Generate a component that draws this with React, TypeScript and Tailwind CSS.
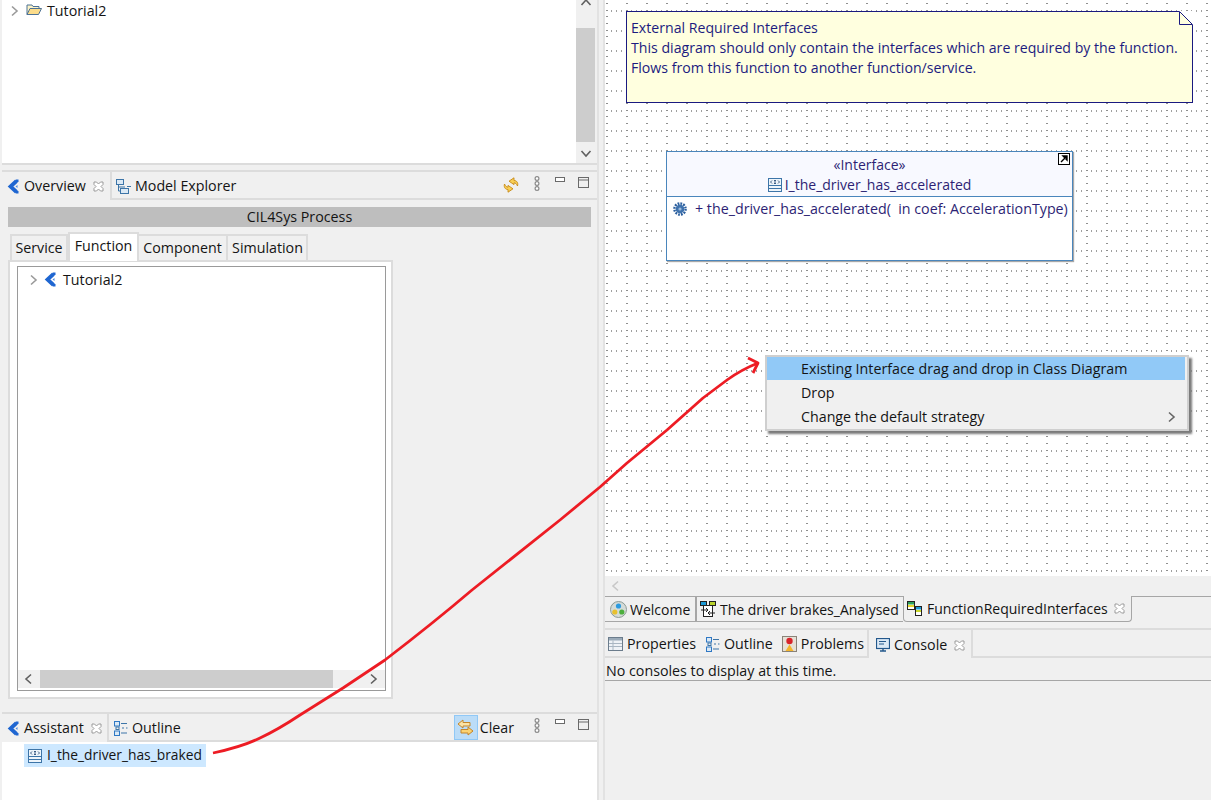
import React from 'react';

const Chev = ({ dir = 'right', cls = 'text-[#9a9a9a]' }: { dir?: 'right' | 'left' | 'up' | 'down'; cls?: string }) => {
  const d = {
    right: 'M4 1.5 L9 6 L4 10.5',
    left: 'M8 1.5 L3 6 L8 10.5',
    up: 'M1.5 8 L6 3 L10.5 8',
    down: 'M1.5 4 L6 9 L10.5 4',
  }[dir];
  return (
    <svg width="12" height="12" viewBox="0 0 12 12" className={`shrink-0 ${cls}`} fill="none" stroke="currentColor" strokeWidth="1.6">
      <path d={d} />
    </svg>
  );
};

const CloseX = () => (
  <svg width="11" height="11" viewBox="0 0 11 11" className="shrink-0">
    <path d="M1 1 H3.5 L5.5 3 L7.5 1 H10 V3.5 L8 5.5 L10 7.5 V10 H7.5 L5.5 8 L3.5 10 H1 V7.5 L3 5.5 L1 3.5 Z" fill="#fff" stroke="#9a9a9a" strokeWidth="1" />
  </svg>
);

const ProcessIcon = () => (
  <svg width="13" height="15" viewBox="0 0 13 15" className="shrink-0">
    <path d="M9.5 2 L3.5 7.5 L9.5 13" fill="none" stroke="#1f66d1" strokeWidth="3.8" />
    <rect x="9" y="0.5" width="2.5" height="2.5" fill="#1f66d1" />
    <rect x="9" y="12" width="2.5" height="2.5" fill="#1f66d1" />
    <path d="M10.5 6 L8.5 7.5 L10.5 9 Z" fill="#4f8ae0" />
  </svg>
);

const FolderIcon = () => (
  <svg width="16" height="13" viewBox="0 0 16 13" className="shrink-0">
    <path d="M1 11.5 V2 H6 L7 3.5 H13 V5.5" fill="#fdf3c6" stroke="#4d7296" />
    <path d="M1 11.5 L4 5.5 H15.5 L12.5 11.5 Z" fill="#fbdc8b" stroke="#4d7296" />
  </svg>
);

const InterfaceIcon = () => (
  <svg width="14" height="14" viewBox="0 0 14 14" className="shrink-0">
    <rect x="0.5" y="0.5" width="13" height="13" fill="#eef5fb" stroke="#3d75a8" />
    <path d="M0.5 7.5 H13.5 M0.5 10.5 H13.5" stroke="#3d75a8" />
    <path d="M4 2.5 L2.5 4 L4 5.5 M10 2.5 L11.5 4 L10 5.5 M6 2.5 H8 M7 2.5 V5.5 M6 5.5 H8" stroke="#2b4f78" fill="none" strokeWidth="0.9" />
  </svg>
);

const ExplorerIcon = () => (
  <svg width="15" height="15" viewBox="0 0 15 15" className="-ml-[1px] shrink-0">
    <rect x="0.5" y="0.5" width="7" height="5" fill="#dbe9f5" stroke="#3d75a8" />
    <rect x="4.5" y="9.5" width="8" height="5" fill="#dbe9f5" stroke="#3d75a8" />
    <path d="M2.5 5.5 V12 H4.5 M2.5 8 H9 M11 7.5 H15" stroke="#3d75a8" fill="none" />
  </svg>
);

const OutlineIcon = () => (
  <svg width="14" height="15" viewBox="0 0 14 15" className="shrink-0">
    <rect x="0.5" y="0.5" width="5" height="4.5" fill="#dbe9f5" stroke="#2f78c4" />
    <rect x="0.5" y="10" width="5" height="4.5" fill="#dbe9f5" stroke="#2f78c4" />
    <path d="M7 2.5 H13 M8 7 H10 M12 7 H13.5 M7 12 H13" stroke="#3d75a8" />
    <rect x="2" y="6" width="3" height="2.5" fill="none" stroke="#3d75a8" />
  </svg>
);

const SyncIcon = () => (
  <svg width="16" height="16" viewBox="0 0 16 16" className="shrink-0" fill="#f9cf55" stroke="#c78a16" strokeWidth="0.9">
    <path d="M14.5 9 C15.5 5.5 13.5 3.5 11 3.5 V0.8 L6 4.2 L11 7.6 V5.8 C12.5 5.8 13.5 7 14.5 9 Z" />
    <path d="M1.5 7 C0.5 10.5 2.5 12.5 5 12.5 V15.2 L10 11.8 L5 8.4 V10.2 C3.5 10.2 2.5 9 1.5 7 Z" />
  </svg>
);

const ViewMenu = () => (
  <svg width="6" height="15" viewBox="0 0 6 15" className="mt-[-4px] shrink-0" fill="#fff" stroke="#8a8a8a" strokeWidth="1.2">
    <circle cx="3" cy="2.5" r="1.9" />
    <circle cx="3" cy="7.5" r="1.9" />
    <circle cx="3" cy="12.5" r="1.9" />
  </svg>
);

const MinMax = () => (
  <div className="ml-[15px] mr-[8px] flex items-start gap-[13px]">
    <svg width="10" height="5" viewBox="0 0 10 5" className="mt-[-5px]">
      <rect x="0.5" y="0.5" width="9" height="4" fill="#fff" stroke="#6a6a6a" />
    </svg>
    <svg width="11" height="11" viewBox="0 0 11 11" className="mt-[-5px]">
      <rect x="0.5" y="0.5" width="10" height="10" fill="#f0f0f0" stroke="#6a6a6a" />
      <path d="M0.5 3 H10.5" stroke="#6a6a6a" />
    </svg>
  </div>
);

const ClearIcon = () => (
  <svg width="17" height="17" viewBox="0 0 17 17">
    <path d="M6 1 V3.5 H13 V7 H6 V9 L1 5 Z" fill="#fbe3a6" stroke="#c4852a" />
    <path d="M11 8 V10.5 H4 V14 H11 V16 L16 12 Z" fill="#fbd271" stroke="#c4852a" />
  </svg>
);

const WelcomeIcon = () => (
  <svg width="17" height="17" viewBox="0 0 17 17" className="shrink-0">
    <circle cx="8.5" cy="8.5" r="8" fill="#d4dbd8" stroke="#8d9a94" />
    <circle cx="8.5" cy="5" r="2.6" fill="#2c9be0" />
    <circle cx="4.8" cy="11" r="2.6" fill="#e8c02c" />
    <circle cx="11.8" cy="11" r="2.6" fill="#4caf3c" />
  </svg>
);

const DiagramIcon = () => (
  <svg width="16" height="16" viewBox="0 0 16 16" className="shrink-0">
    <rect x="0.5" y="0.5" width="6" height="4" fill="#1c9ad6" stroke="#222" />
    <rect x="9.5" y="0.5" width="6" height="4" fill="#b9d22c" stroke="#222" />
    <rect x="3.5" y="4.5" width="9" height="11" fill="#fff" stroke="#222" />
    <path d="M1 9 H8 M6 7 L8 9 L6 11 M15 12 H8 M10 10 L8 12 L10 14" fill="none" stroke="#222" />
  </svg>
);

const ClassDiagramIcon = () => (
  <svg width="15" height="15" viewBox="0 0 15 15" className="shrink-0">
    <rect x="0.5" y="0.5" width="7" height="8" fill="#fff" stroke="#222" />
    <rect x="1" y="1" width="6" height="2.5" fill="#2aa05a" />
    <rect x="1" y="4" width="6" height="2" fill="#e8d62c" />
    <rect x="8.5" y="5.5" width="6" height="9" fill="#fff" stroke="#222" />
    <rect x="9" y="6" width="5" height="2.5" fill="#1c9ad6" />
    <rect x="9" y="9" width="5" height="2" fill="#c8d62c" />
  </svg>
);

const PropertiesIcon = () => (
  <svg width="15" height="14" viewBox="0 0 15 14" className="shrink-0">
    <rect x="0.5" y="0.5" width="14" height="13" fill="#eef2f6" stroke="#6b7c8c" />
    <rect x="1" y="1" width="13" height="2.5" fill="#9aaab8" />
    <path d="M5 3.5 V13 M1 6.5 H14 M1 9.5 H14" stroke="#a9b6c2" />
  </svg>
);

const ProblemsIcon = () => (
  <svg width="15" height="16" viewBox="0 0 15 16" className="shrink-0">
    <rect x="0.5" y="0.5" width="14" height="15" fill="#e6e0d6" stroke="#8a8378" />
    <circle cx="7.5" cy="5" r="3.2" fill="#d8232a" />
    <path d="M7.5 8.5 L11.5 15 H3.5 Z" fill="#f4b52c" />
  </svg>
);

const ConsoleIcon = () => (
  <svg width="14" height="14" viewBox="0 0 14 14" className="shrink-0">
    <rect x="0.5" y="0.5" width="13" height="10" fill="#dbe9f5" stroke="#23588c" strokeWidth="1.2" />
    <path d="M3 3.5 H10 M3 6 H8" stroke="#23588c" />
    <path d="M4 13 H10 M7 10.5 V13" stroke="#23588c" strokeWidth="1.4" />
  </svg>
);

const GearIcon = () => (
  <svg width="14" height="14" viewBox="0 0 14 14" className="shrink-0">
    <circle cx="7" cy="7" r="5.6" fill="none" stroke="#2c5f9e" strokeWidth="2.4" strokeDasharray="1.8 1.1" />
    <circle cx="7" cy="7" r="4.4" fill="#3f72ad" />
    <circle cx="7" cy="7" r="1.6" fill="#9dbcdc" />
  </svg>
);

function DotGrid() {
  // Papyrus grid: dotted lines every 20px
  return (
    <svg className="absolute inset-0 h-full w-full" aria-hidden="true">
      <defs>
        <pattern id="grid" x="1" y="10" width="20" height="20" patternUnits="userSpaceOnUse">
          <rect x="0" y="0" width="2" height="1" fill="#8f8f8f" />
          <rect x="5" y="0" width="1" height="2" fill="#a0a0a0" />
          <rect x="10" y="0" width="1" height="2" fill="#a0a0a0" />
          <rect x="15" y="0" width="1" height="2" fill="#a0a0a0" />
          <rect x="0" y="6" width="2" height="1" fill="#8f8f8f" />
          <rect x="0" y="13" width="2" height="1" fill="#8f8f8f" />
        </pattern>
      </defs>
      <rect width="100%" height="100%" fill="url(#grid)" />
    </svg>
  );
}

function ViewTab({ icon, label, closable, active, width }: { icon: React.ReactNode; label: string; closable?: boolean; active?: boolean; width: string }) {
  return (
    <div className={`relative flex h-full items-center gap-[4px] pl-[5px] pt-[2px] ${width} ${active ? 'border-r-2 border-[#dcdcdc] bg-[#f0f0f0]' : ''}`}>
      {icon}
      <span className="whitespace-nowrap">{label}</span>
      {closable && <span className="ml-[3px]"><CloseX /></span>}
      {active && <div className="absolute bottom-[-2px] left-0 h-[2px] w-full bg-[#f0f0f0]" />}
    </div>
  );
}

function InnerTab({ label, active, width }: { label: string; active?: boolean; width: string }) {
  return (
    <div className={`flex items-center justify-center ${width} ${active ? 'relative top-[1px] h-[29px] border-x-2 border-t-2 border-[#dcdcdc] bg-white pb-[4px]' : 'h-[26px] border-r-2 border-t-2 border-[#dcdcdc] pb-[1px]'}`}>
      {label}
    </div>
  );
}

export default function App() {
  return (
    <div className="relative flex h-[800px] w-[1211px] overflow-hidden bg-[#f0f0f0] font-['Open_Sans','Noto_Sans',sans-serif] text-[14.25px] text-[#141414]">
      {/* left column */}
      <div className="flex h-full w-[599px] shrink-0 flex-col border-r-2 border-[#e2e2e2] pl-[2px]">
        {/* project explorer remainder */}
        <div className="flex h-[165px] shrink-0 border-b-2 border-[#dcdcdc] bg-white">
          <div className="flex flex-1 items-start gap-[5px] pl-[6px]">
            <span className="mt-[5px]"><Chev /></span>
            <span className="ml-[1px] mt-[3px]"><FolderIcon /></span>
            <span className="mt-[1px] leading-[20px]">Tutorial2</span>
          </div>
          <div className="flex w-[19px] flex-col bg-[#f0f0f0]">
            <div className="flex h-[28px] items-start justify-center"><span className="mt-[-3px]"><Chev dir="up" cls="text-[#606060]" /></span></div>
            <div className="h-[114px] bg-[#cdcdcd]" />
            <div className="flex flex-1 items-center justify-center"><Chev dir="down" cls="text-[#606060]" /></div>
          </div>
          <div className="w-[2px] bg-[#f0f0f0]" />
        </div>

        {/* overview view */}
        <div className="mt-[5px] flex h-[537px] shrink-0 flex-col border-t-2 border-[#dcdcdc]">
          <div className="flex h-[28px] shrink-0 items-center border-b-2 border-[#dcdcdc]">
            <ViewTab icon={<ProcessIcon />} label="Overview" closable active width="w-[110px]" />
            <ViewTab icon={<ExplorerIcon />} label="Model Explorer" width="w-[160px]" />
            <div className="flex flex-1 items-center justify-end">
              <SyncIcon />
              <span className="ml-[15px] flex"><ViewMenu /></span>
              <MinMax />
            </div>
          </div>
          <div className="flex flex-1 flex-col px-[6px] pb-[8px] pt-[7px]">
            <div className="flex h-[20px] items-center justify-center bg-[#bebebe]">CIL4Sys Process</div>
            <div className="ml-[2px] mt-[7px] flex h-[26px] items-end">
              <InnerTab label="Service" width="w-[58px] border-l-2" />
              <InnerTab label="Function" active width="w-[71px]" />
              <InnerTab label="Component" width="w-[89px]" />
              <InnerTab label="Simulation" width="w-[80px] pl-[1px]" />
            </div>
            <div className="flex w-[385px] flex-1 border-2 border-[#dcdcdc] bg-white pb-[6px] pl-[7px] pr-[5px] pt-[4px]">
              <div className="flex flex-1 flex-col border border-[#9a9a9a] bg-white">
                <div className="flex flex-1 items-start gap-[5px] pl-[9px] pt-[3px]">
                  <span className="mt-[4px]"><Chev /></span>
                  <span className="mt-[2px]"><ProcessIcon /></span>
                  <span className="ml-[1px] leading-[20px]">Tutorial2</span>
                </div>
                <div className="mb-[2px] flex h-[18px] bg-[#f0f0f0]">
                  <div className="flex w-[22px] items-center justify-center"><Chev dir="left" cls="text-[#606060]" /></div>
                  <div className="w-[293px] bg-[#cdcdcd]" />
                  <div className="flex flex-1 items-center justify-end pr-[6px]"><Chev cls="text-[#606060]" /></div>
                </div>
              </div>
            </div>
          </div>
        </div>

        {/* assistant view */}
        <div className="mt-[5px] flex flex-1 flex-col border-t-2 border-[#dcdcdc]">
          <div className="flex h-[28px] shrink-0 items-center border-b-2 border-[#dcdcdc]">
            <ViewTab icon={<ProcessIcon />} label="Assistant" closable active width="w-[107px]" />
            <ViewTab icon={<OutlineIcon />} label="Outline" width="w-[120px]" />
            <div className="flex flex-1 items-center justify-end">
              <div className="flex h-[25px] w-[24px] items-center justify-center border border-[#90c8f6] bg-[#bbdcf7]"><ClearIcon /></div>
              <span className="ml-[2px] mr-[20px] pt-[2px]">Clear</span>
              <ViewMenu />
              <MinMax />
            </div>
          </div>
          <div className="flex-1 bg-white pl-[22px] pt-[2px]">
            <div className="flex h-[23px] w-[182px] items-center gap-[5px] bg-[#cde8ff] pl-[4px] text-[13.8px]">
              <InterfaceIcon />
              <span className="whitespace-nowrap">I_the_driver_has_braked</span>
            </div>
          </div>
        </div>
      </div>

      {/* right column */}
      <div className="ml-[4px] flex h-full flex-1 flex-col border-l-2 border-[#e2e2e2]">
        <div className="relative h-[576px] shrink-0 bg-white">
          <DotGrid />

          <div className="absolute left-[21px] top-[11px] h-[92px] w-[567px] border border-[#1a1a80] bg-[#ffffdf] pl-[4px] pt-[6px] text-[14.15px] leading-[20px] text-[#1c1c80]">
            <p>External Required Interfaces</p>
            <p>This diagram should only contain the interfaces which are required by the function.</p>
            <p>Flows from this function to another function/service.</p>
            <svg width="14" height="14" viewBox="0 0 14 14" className="absolute right-[-1px] top-[-1px]">
              <path d="M0 0 H14 V14 H0 Z" fill="#fff" />
              <path d="M0.5 0.5 L13.5 13.5 H0.5 Z" fill="#ffffdf" stroke="#1a1a80" />
            </svg>
          </div>

          <div className="absolute left-[61px] top-[151px] flex h-[110px] w-[407px] flex-col border border-[#4a86bc] bg-white text-[#2d1f74] shadow-[1px_1px_1px_#a8a8a8]">
            <div className="h-[45px] shrink-0 border-b border-[#4a86bc] bg-[#f8f9ff] text-center text-[14px] leading-[20px]">
              <p className="pt-[3px]">«Interface»</p>
              <p className="flex items-center justify-center gap-[3px]"><InterfaceIcon />I_the_driver_has_accelerated</p>
            </div>
            <div className="flex items-center gap-[8px] pl-[6px] pt-[1px] leading-[22px]">
              <GearIcon />
              <span className="whitespace-pre">+ the_driver_has_accelerated(  in coef: AccelerationType)</span>
            </div>
            <svg width="12" height="12" viewBox="0 0 12 12" className="absolute right-[2px] top-[1px]">
              <rect x="0.5" y="0.5" width="11" height="11" fill="#fff" stroke="#000" />
              <path d="M3 9 L8 4 M5 3 H9 V7 Z" stroke="#000" fill="#000" strokeWidth="1.4" />
            </svg>
          </div>

          <div className="absolute left-[160px] top-[355px] w-[424px] border-2 border-[#cfcfcf] bg-[#f0f0f0] pr-[2px] text-[#141414] shadow-[3px_3px_2px_#7a7a7a]">
            <div className="flex h-[23px] items-center bg-[#91c9f7] pl-[34px]">Existing Interface drag and drop in Class Diagram</div>
            <div className="mt-[1px] flex h-[24px] items-center pl-[34px]">Drop</div>
            <div className="flex h-[24px] items-center justify-between pl-[34px] pr-[8px]">
              Change the default strategy
              <Chev cls="text-[#666]" />
            </div>
          </div>
        </div>

        <div className="flex h-[20px] shrink-0 items-center pl-[5px]"><Chev dir="left" cls="text-[#c8c8c8]" /></div>

        {/* editor tabs */}
        <div className="flex h-[26px] shrink-0 items-stretch text-[14px]">
          <div className="flex w-[92px] items-center gap-[3px] border-y border-r-2 border-y-[#a6a6a6] border-r-[#a6a6a6] pl-[5px]">
            <WelcomeIcon />Welcome
          </div>
          <div className="flex w-[206px] items-center gap-[4px] border-y border-y-[#a6a6a6] pl-[3px]">
            <DiagramIcon /><span className="whitespace-nowrap">The driver brakes_Analysed</span>
          </div>
          <div className="flex w-[229px] items-center gap-[5px] rounded-b-[4px] border-x border-b border-[#a6a6a6] pl-[3px]">
            <ClassDiagramIcon /><span className="whitespace-nowrap">FunctionRequiredInterfaces</span><span className="ml-[1px]"><CloseX /></span>
          </div>
          <div className="flex-1 border-t border-[#a6a6a6]" />
        </div>

        {/* console view */}
        <div className="mt-[6px] flex h-[30px] shrink-0 items-stretch border-t-2 border-[#dcdcdc]">
          <div className="flex w-[264px] items-center border-b-2 border-r-2 border-[#dcdcdc] pl-[3px] pt-[2px]">
            <span className="flex items-center gap-[4px]"><PropertiesIcon />Properties</span>
            <span className="ml-[10px] flex items-center gap-[4px]"><OutlineIcon />Outline</span>
            <span className="ml-[9px] flex items-center gap-[4px]"><ProblemsIcon />Problems</span>
          </div>
          <div className="flex w-[104px] items-center gap-[4px] border-r-2 border-[#dcdcdc] pl-[7px] pt-[2px]">
            <ConsoleIcon />Console<span className="ml-[3px]"><CloseX /></span>
          </div>
          <div className="flex-1 border-b-2 border-[#dcdcdc]" />
        </div>
        <div className="flex h-[23px] shrink-0 items-center border-b border-[#a6a6a6] pl-[1px] pt-[3px]">No consoles to display at this time.</div>
      </div>

      {/* red annotation arrow drawn over the screenshot */}
      <svg className="pointer-events-none absolute inset-0 h-full w-full" viewBox="0 0 1211 800" fill="none" stroke="#ed1c24" strokeWidth="2.8" strokeLinejoin="round">
        <path d="M213 753 C232 749 248 744 260 738 C275 731 288 723 300 715 L343 688 L385 660 C415 637 445 613 472 590 L560 520 L600 487 L627 463 L667 430 L703 398 L727 380 C738 372 748 367 758 363" />
        <path d="M748 358 L758 363 L753 373" />
      </svg>
    </div>
  );
}
